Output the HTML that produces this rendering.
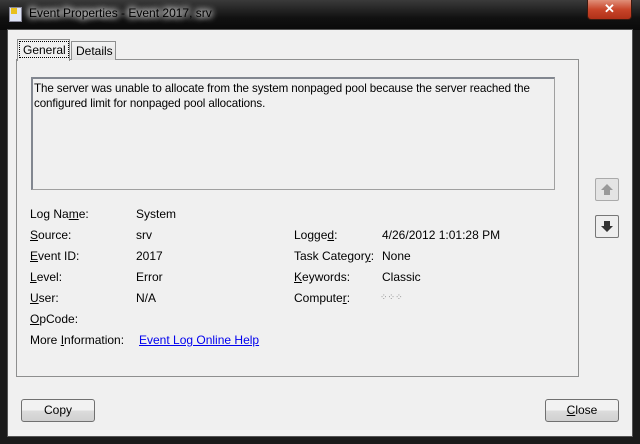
<!DOCTYPE html>
<html><head><style>
*{margin:0;padding:0;box-sizing:border-box}
body{width:640px;height:444px;overflow:hidden;background:#1a1a1a;font-family:"Liberation Sans",sans-serif;font-size:12px;color:#000;position:relative}
.a{position:absolute;white-space:nowrap}
.title{left:0;top:0;width:640px;height:30px;background:linear-gradient(#3a3a3a,#111 60%,#0a0a0a)}
.client{left:7px;top:29px;width:626px;height:408px;background:#f0f0f0;border:1px solid #555}
.panel{left:16px;top:59px;width:563px;height:318px;border:1px solid #8e8f8f;background:#fcfcfc}
.panelin{left:17px;top:60px;width:561px;height:316px;background:#f0f0f0}
.tab{border:1px solid #8e8f8f;border-bottom:none;background:linear-gradient(#f3f3f3,#e0e0e0);padding:2px 4px}
.box{left:31px;top:77px;width:524px;height:113px;border:1px solid #a0a0a0;border-top:2px solid #828790;border-left:2px solid #828790;background:#f0f0f0;padding:2px 1px;line-height:15px;font-size:11.6px;letter-spacing:-0.1px;overflow:hidden}
.btn{border:1px solid #707070;border-radius:3px;background:linear-gradient(#f2f2f2 50%,#dcdcdc 50%,#d0d0d0);text-align:center;line-height:21px}
.sq{width:24px;height:23px;border:1px solid #aaa;border-radius:2px;background:#eee}
u{text-decoration:underline}
</style></head><body>
<div class="a title"></div>
<div class="a" style="left:9px;top:7px;width:13px;height:15px;background:#dfe4f5;border:1px solid #889"></div>
<div class="a" style="left:11px;top:8px;width:6px;height:6px;background:#e8c020"></div>
<div class="a" style="left:29px;top:6px;color:#000;font-size:12px;text-shadow:0 0 8px #fff,0 0 8px #fff,0 0 6px #fff">Event Properties - Event 2017, srv</div>
<div class="a" style="left:587px;top:0;width:45px;height:20px;border:1px solid #3a1a10;border-top:none;border-radius:0 0 4px 4px;background:linear-gradient(#e0907a,#c8452a 50%,#b03018);color:#fff;font-weight:bold;text-align:center;font-size:13px;line-height:18px">✕</div>
<div class="a client"></div>
<div class="a panel"></div>
<div class="a panelin"></div>
<div class="a tab" style="left:71px;top:41px;width:45px;height:19px">Details</div>
<div class="a" style="left:17px;top:39px;width:53px;height:22px;border:1px solid #8e8f8f;border-bottom:none;background:#f0f0f0"></div>
<div class="a" style="left:19px;top:41px;width:50px;height:17px;border:1px dotted #000;padding:1px 3px">General</div>
<div class="a box">The server was unable to allocate from the system nonpaged pool because the server reached the<br>configured limit for nonpaged pool allocations.</div>
<div class="a" style="left:30px;top:207px">Log Na<u>m</u>e:</div><div class="a" style="left:136px;top:207px">System</div>
<div class="a" style="left:30px;top:228px"><u>S</u>ource:</div><div class="a" style="left:136px;top:228px">srv</div>
<div class="a" style="left:30px;top:249px"><u>E</u>vent ID:</div><div class="a" style="left:136px;top:249px">2017</div>
<div class="a" style="left:30px;top:270px"><u>L</u>evel:</div><div class="a" style="left:136px;top:270px">Error</div>
<div class="a" style="left:30px;top:291px"><u>U</u>ser:</div><div class="a" style="left:136px;top:291px">N/A</div>
<div class="a" style="left:30px;top:312px"><u>O</u>pCode:</div>
<div class="a" style="left:30px;top:333px">More <u>I</u>nformation:</div><div class="a" style="left:139px;top:333px;color:#0000ee;text-decoration:underline">Event Log Online Help</div>
<div class="a" style="left:294px;top:228px">Logge<u>d</u>:</div><div class="a" style="left:382px;top:228px">4/26/2012 1:01:28 PM</div>
<div class="a" style="left:294px;top:249px">Task Categor<u>y</u>:</div><div class="a" style="left:382px;top:249px">None</div>
<div class="a" style="left:294px;top:270px"><u>K</u>eywords:</div><div class="a" style="left:382px;top:270px">Classic</div>
<div class="a" style="left:294px;top:291px">Compute<u>r</u>:</div><div class="a" style="left:380px;top:292px;color:#888;font-size:9px">⁘⁘⁘</div>
<div class="a sq" style="left:595px;top:178px;background:#e4e4e4"><svg width="22" height="21"><path d="M11 5 L17 11 L14 11 L14 16 L8 16 L8 11 L5 11 Z" fill="#999"/></svg></div>
<div class="a sq" style="left:595px;top:215px;border-color:#777"><svg width="22" height="21"><path d="M11 16 L17 10 L14 10 L14 5 L8 5 L8 10 L5 10 Z" fill="#333"/></svg></div>
<div class="a btn" style="left:21px;top:399px;width:74px;height:23px">Copy</div>
<div class="a btn" style="left:545px;top:399px;width:74px;height:23px"><u>C</u>lose</div>
</body></html>
